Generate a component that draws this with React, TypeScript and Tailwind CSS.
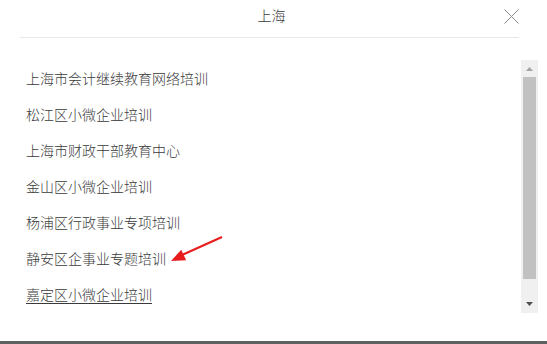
import React from "react";

const items = [
  "上海市会计继续教育网络培训",
  "松江区小微企业培训",
  "上海市财政干部教育中心",
  "金山区小微企业培训",
  "杨浦区行政事业专项培训",
  "静安区企事业专题培训",
  "嘉定区小微企业培训",
];

export default function App() {
  return (
    <div
      className="w-[547px] h-[344px] bg-white flex flex-col overflow-hidden text-[#3a3a3a]"
      style={{ fontFamily: '"Noto Sans CJK SC", "Noto Sans", sans-serif' }}
    >
      <div className="ml-[20px] mr-[28px] h-[38px] border-b border-[#e8e8e8] flex items-start relative">
        <div className="flex-1 text-center text-[14px] leading-[30px] pl-[4px] font-light">上海</div>
        <div className="absolute right-0 top-[9px] w-[15px] h-[15px]">
          <svg width="15" height="15" viewBox="0 0 15 15">
            <path d="M0.5 0.5 L14.5 14.5 M14.5 0.5 L0.5 14.5" stroke="#8a8a8a" strokeWidth="1" fill="none" />
          </svg>
        </div>
      </div>
      <div className="mt-[22px] h-[253px] flex ml-[20px] mr-[9px]">
        <div className="flex-1 flex flex-col pl-[6px] relative">
          {items.map((t, i) => (
            <div key={i} className="h-[36px] flex items-center text-[14px] leading-[20px] font-light">
              <span className={i === items.length - 1 ? "underline underline-offset-[3px]" : ""}>{t}</span>
            </div>
          ))}
          <svg className="absolute left-[145px] top-[175px]" width="64" height="32" viewBox="0 0 64 32">
            <path d="M57 2 L17 20" stroke="#e81c1c" strokeWidth="2" fill="none" />
            <polygon points="6,26 16.2,14.8 21.2,25.2" fill="#e81c1c" />
          </svg>
        </div>
        <div className="w-[17px] h-full bg-[#f0f0f0] flex flex-col items-center">
          <div className="h-[17px] flex items-center justify-center">
            <svg width="7" height="4" viewBox="0 0 7 4">
              <polygon points="3.5,0 7,4 0,4" fill="#a3a3a3" />
            </svg>
          </div>
          <div className="w-[13px] h-[202px] bg-[#c1c1c1]" />
          <div className="flex-1 flex items-end pb-[7px]">
            <svg width="7" height="4" viewBox="0 0 7 4">
              <polygon points="0,0 7,0 3.5,4" fill="#505050" />
            </svg>
          </div>
        </div>
      </div>
      <div className="flex-1" />
      <div className="h-[3px] bg-[#5c6262]" />
    </div>
  );
}
